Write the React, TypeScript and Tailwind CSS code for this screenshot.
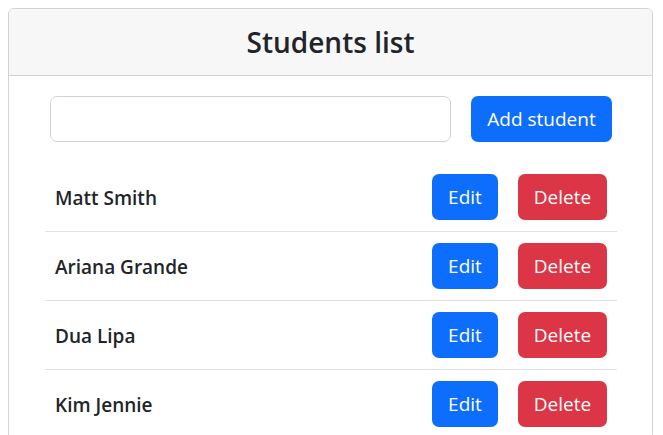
import React, { useState } from 'react';

const students = ['Matt Smith', 'Ariana Grande', 'Dua Lipa', 'Kim Jennie'];

const App: React.FC = () => {
  const [name, setName] = useState('');

  return (
    <div
      className="min-h-screen bg-white pl-2 pr-[10px] pt-2 text-[#212529]"
      style={{ fontFamily: '"Open Sans", "Noto Sans", sans-serif' }}
    >
      <div className="overflow-hidden rounded-[6px] border border-[#d3d3d3]">
        {/* Header */}
        <div className="flex h-[67px] items-center justify-center border-b border-[#d3d3d3] bg-[#f7f7f7]">
          <h2 className="text-[28px] font-semibold leading-none">Students list</h2>
        </div>

        {/* Body */}
        <div className="pl-[36px] pr-[35px] pt-[20px]">
          <div className="flex gap-[20px] px-[5px]">
            <input
              value={name}
              onChange={(e) => setName(e.target.value)}
              className="h-[46px] flex-1 rounded-[7px] border border-[#ced4da] px-3 text-[20px] outline-none"
            />
            <button className="h-[46px] w-[141px] rounded-[7px] bg-[#0d6efd] text-[19px] text-white">
              Add student
            </button>
          </div>

          <ul className="mt-[21px]">
            {students.map((s) => (
              <li
                key={s}
                className="flex items-center justify-between border-b border-[#dee2e6] px-[10px] py-[11px]"
              >
                <span className="pt-[3px] text-[19px] font-semibold">{s}</span>
                <div className="flex gap-[20px]">
                  <button className="h-[46px] w-[66px] rounded-[7px] bg-[#0d6efd] text-[19px] text-white">
                    Edit
                  </button>
                  <button className="h-[46px] w-[89px] rounded-[7px] bg-[#dc3545] text-[19px] text-white">
                    Delete
                  </button>
                </div>
              </li>
            ))}
          </ul>
        </div>
      </div>
    </div>
  );
};

export default App;
